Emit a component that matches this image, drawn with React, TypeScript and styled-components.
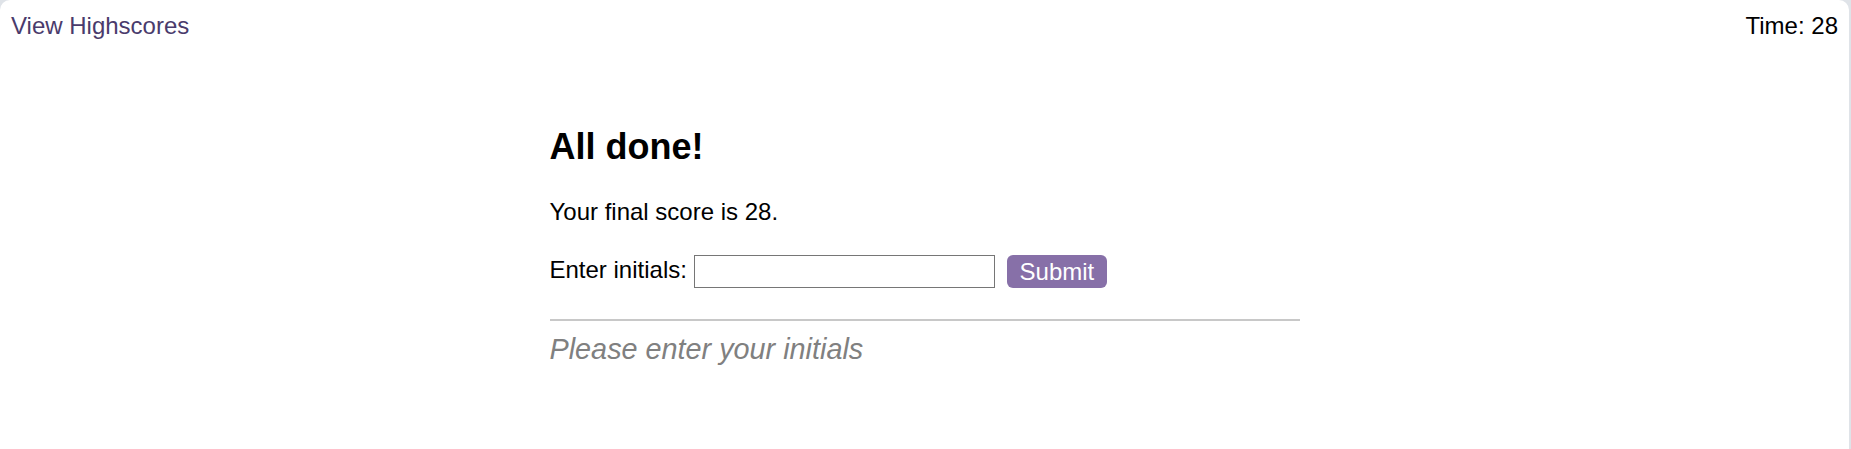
import styled, { createGlobalStyle } from "styled-components";

const frameColor = "#dfe3e8";
const accentColor = "#8770a8";
const linkColor = "#4a3b6c";

const GlobalStyle = createGlobalStyle`
  html, body, #root {
    height: 100%;
  }
  body {
    margin: 0;
    background-color: ${frameColor};
    font-family: "Liberation Sans", Arial, sans-serif;
    color: #000;
  }
  * {
    box-sizing: border-box;
  }
`;

export default function App() {
  const score = 28;

  return (
    <>
      <GlobalStyle />
      <Window>
        <Header>
          <HighscoreLink href="#">View Highscores</HighscoreLink>
          <Timer>Time: {score}</Timer>
        </Header>

        <Main>
          <Title>All done!</Title>
          <Score>Your final score is {score}.</Score>

          <Form onSubmit={(e) => e.preventDefault()}>
            <Label htmlFor="initials">Enter initials:</Label>
            <Input id="initials" type="text" />
            <SubmitButton type="submit">Submit</SubmitButton>
          </Form>

          <Line />

          <Feedback>Please enter your initials</Feedback>
        </Main>
      </Window>
    </>
  );
}

const Window = styled.div`
  min-height: 100%;
  margin-right: 2px;
  background-color: white;
  border-radius: 10px 10px 0 0;
`;

const Header = styled.header`
  display: flex;
  justify-content: space-between;
  align-items: center;
  padding: 12px 11px 0 11px;
  font-size: 24px;
  line-height: 28px;
`;

const HighscoreLink = styled.a`
  color: ${linkColor};
  text-decoration: none;
`;

const Timer = styled.span`
  color: #000;
`;

const Main = styled.main`
  width: 750px;
  margin: 86px auto 0;
`;

const Title = styled.h2`
  margin: 0;
  font-size: 36px;
  line-height: 42px;
  font-weight: 700;
`;

const Score = styled.p`
  margin: 30px 0 0;
  font-size: 24px;
  line-height: 28px;
`;

const Form = styled.form`
  display: flex;
  align-items: center;
  height: 33px;
  margin-top: 29px;
`;

const Label = styled.label`
  font-size: 24px;
  line-height: 28px;
  padding-bottom: 4px;
  margin-right: 7px;
`;

const Input = styled.input`
  width: 301px;
  height: 33px;
  border: 1px solid #767676;
  border-radius: 0;
  padding: 2px 4px;
  font-family: inherit;
  font-size: 24px;
  background: white;
`;

const SubmitButton = styled.button`
  width: 100px;
  height: 33px;
  margin-left: 12px;
  padding: 0;
  border: none;
  border-radius: 6px;
  background-color: ${accentColor};
  color: white;
  font-family: inherit;
  font-size: 24px;
  line-height: 28px;
  cursor: pointer;
`;

const Line = styled.div`
  width: 100%;
  border-top: 2px solid #c8c8c8;
  margin-top: 31px;
`;

const Feedback = styled.p`
  margin: 12px 0 0;
  font-size: 28.8px;
  line-height: 33px;
  font-style: italic;
  color: #808080;
`;
